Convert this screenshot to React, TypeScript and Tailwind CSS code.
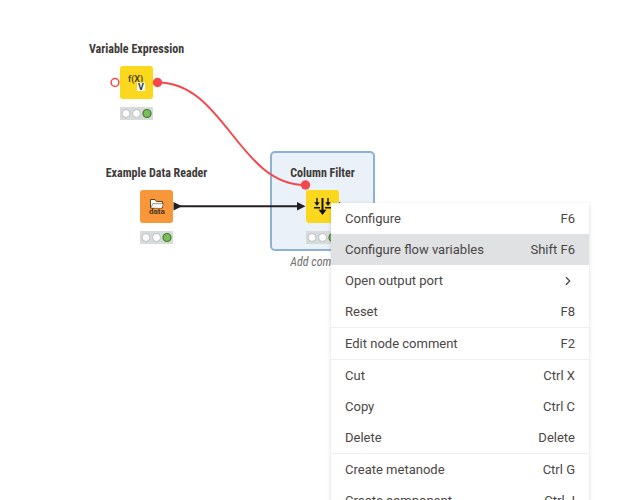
import React from "react";
import { ChevronRight } from "lucide-react";
import { clsx } from "clsx";

interface WorkflowNodeProps {
  title: string;
  className: string;
  color: string;
  selected?: boolean;
  comment?: string;
  children: React.ReactNode;
}

interface MenuEntry {
  label: string;
  hotkey?: string;
  submenu?: boolean;
  active?: boolean;
}

const menuGroups: MenuEntry[][] = [
  [
    { label: "Configure", hotkey: "F6" },
    { label: "Configure flow variables", hotkey: "Shift F6", active: true },
    { label: "Open output port", submenu: true },
    { label: "Reset", hotkey: "F8" },
  ],
  [{ label: "Edit node comment", hotkey: "F2" }],
  [
    { label: "Cut", hotkey: "Ctrl X" },
    { label: "Copy", hotkey: "Ctrl C" },
    { label: "Delete", hotkey: "Delete" },
  ],
  [
    { label: "Create metanode", hotkey: "Ctrl G" },
    { label: "Create component", hotkey: "Ctrl J" },
  ],
];

// traffic light below every node
const NodeStatus = () => (
  <svg className="block h-[13px] w-[33px]" viewBox="0 0 33 13" aria-hidden="true">
    <rect width="33" height="13" fill="#d8dbdc" />
    <circle cx="6" cy="6.5" r="4" fill="#fff" stroke="#b4b7b8" strokeWidth="0.9" />
    <circle cx="16.5" cy="6.5" r="4" fill="#fff" stroke="#b4b7b8" strokeWidth="0.9" />
    <circle cx="27" cy="6.5" r="4" fill="#7bbd5b" stroke="#3f7d2a" strokeWidth="1.2" />
  </svg>
);

const WorkflowNode = ({ title, className, color, selected, comment, children }: WorkflowNodeProps) => (
  <div className={clsx("absolute w-[105px]", className)}>
    <div
      className={clsx(
        "flex h-[100px] flex-col items-center rounded-[5px] border-2 pt-3",
        selected ? "border-[#8fb1d8] bg-[#ebf1f8]" : "border-transparent"
      )}
    >
      <h2 className="text-[12px] leading-4 font-bold whitespace-nowrap text-[#3e3a39]">{title}</h2>
      <div className={clsx("mt-[9px] h-[33px] w-[33px] shrink-0 rounded-[3px]", color)}>{children}</div>
      <div className="mt-2">
        <NodeStatus />
      </div>
    </div>
    {comment && (
      <p className="mt-[3px] text-center text-[12px] leading-4 whitespace-nowrap text-[#6e6e6e] italic">{comment}</p>
    )}
  </div>
);

const VariableIcon = () => (
  <svg className="block h-full w-full" viewBox="0 0 33 33" aria-hidden="true">
    <text x="8" y="16" fontSize="9" fontWeight="600" fill="#4a4020" fontFamily="Roboto, sans-serif">
      f(X)
    </text>
    <rect x="17" y="16.5" width="8" height="8.5" fill="#fff" />
    <text x="18" y="24" fontSize="9" fontWeight="700" fill="#2b3440" fontFamily="Roboto, sans-serif">
      V
    </text>
  </svg>
);

const FolderIcon = () => (
  <svg className="block h-full w-full" viewBox="0 0 33 33" aria-hidden="true">
    <path d="M10.5 18V9.5h4.5l1.5 2h6V18Z" fill="#fff" stroke="#5e3f22" strokeWidth="1" />
    <path d="M11 17.5l1.8-3.8h10.7l-1.5 4.3" fill="#fff" stroke="#5e3f22" strokeWidth="0.6" />
    <text x="9" y="24" fontSize="8" fontWeight="700" fill="#4b3320" fontFamily="Roboto, sans-serif">
      data
    </text>
  </svg>
);

const FilterIcon = () => (
  <svg className="block h-full w-full" viewBox="0 0 33 33" fill="none" stroke="#151515" aria-hidden="true">
    <path d="M11 8v6M22 8v6" strokeWidth="1.4" />
    <path d="M8.3 12.3 11 16l2.7-3.7ZM19.3 12.3 22 16l2.7-3.7Z" fill="#151515" stroke="none" />
    <path d="M8 17.8h6M19 17.8h6" strokeWidth="1.4" />
    <path d="M16.5 8v13" strokeWidth="2" />
    <path d="M12.5 19.8h8l-4 5.2Z" fill="#151515" stroke="none" />
  </svg>
);

const Connectors = () => (
  <svg className="pointer-events-none absolute top-0 left-0 h-[270px] w-[400px]" viewBox="0 0 400 270" aria-hidden="true">
    <path d="M158 82.5C224 82.5 239 185 305 185" fill="none" stroke="#f4484c" strokeWidth="2" />
    <circle cx="115" cy="82.5" r="3.9" fill="#fff" stroke="#f4484c" strokeWidth="1.5" />
    <circle cx="157.5" cy="82.5" r="4.7" fill="#f4484c" />
    <circle cx="305.5" cy="185" r="4.7" fill="#f4484c" />
    <path d="M174 206.3h124" stroke="#231f20" strokeWidth="2" />
    <path d="M173.5 202v8.6l8.5-4.3ZM297 202v8.6l8.5-4.3ZM339 202v8.6l8.5-4.3Z" fill="#231f20" />
  </svg>
);

const ContextMenu = () => (
  <ul
    role="menu"
    className="absolute top-[203px] left-[331px] w-[258px] bg-white font-[Roboto,sans-serif] text-[13px] leading-[31px] text-[#4a4646] shadow-[0_1px_4px_rgba(0,0,0,0.16)]"
  >
    {menuGroups.map((group, index) => (
      <li key={index} role="none" className={clsx(index > 0 && "border-t border-[#eeefef]")}>
        {group.map((entry) => (
          <button
            key={entry.label}
            type="button"
            role="menuitem"
            className={clsx(
              "flex w-full items-center justify-between px-[14px] text-left hover:bg-[#dfe1e2]",
              entry.active && "bg-[#dfe1e2]"
            )}
          >
            <span>{entry.label}</span>
            {entry.submenu ? <ChevronRight size={14} strokeWidth={2} /> : <span>{entry.hotkey}</span>}
          </button>
        ))}
      </li>
    ))}
  </ul>
);

export default function App() {
  return (
    <main className="relative h-screen w-full overflow-hidden bg-white font-['Roboto_Condensed','Liberation_Sans_Narrow',Roboto,sans-serif]">
      <WorkflowNode title="Variable Expression" className="top-[27px] left-[84px]" color="bg-[#fbd81e]">
        <VariableIcon />
      </WorkflowNode>
      <WorkflowNode title="Example Data Reader" className="top-[151px] left-[104px]" color="bg-[#f8973a]">
        <FolderIcon />
      </WorkflowNode>
      <WorkflowNode
        title="Column Filter"
        className="top-[151px] left-[270px]"
        color="bg-[#fbd81e]"
        comment="Add comment"
        selected
      >
        <FilterIcon />
      </WorkflowNode>
      <Connectors />
      <ContextMenu />
    </main>
  );
}
